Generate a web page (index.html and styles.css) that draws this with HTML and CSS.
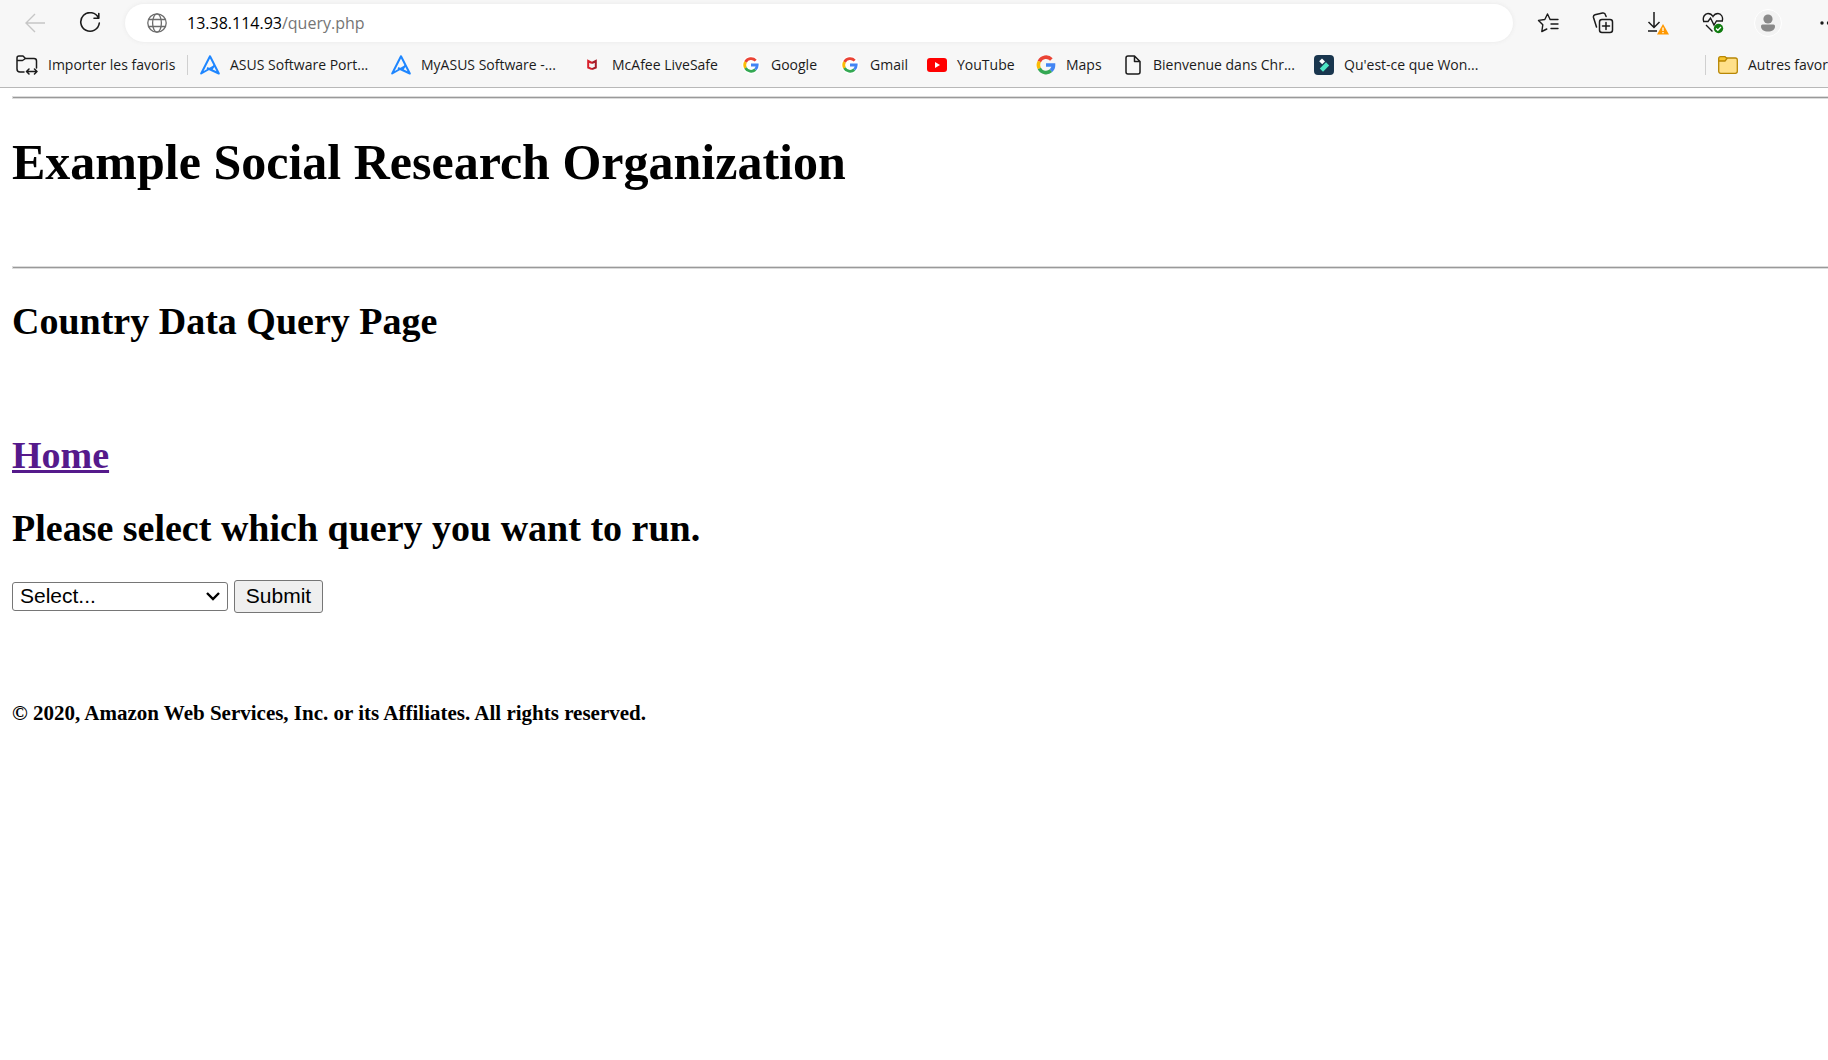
FILE: index.html
```html
<!DOCTYPE html>
<html lang="fr">
<head>
<meta charset="utf-8">
<title>Country Data Query Page</title>
<link rel="stylesheet" href="styles.css">
</head>
<body>
<header class="browser">
  <div class="toolbar">
    <button class="tool back" aria-label="Retour" disabled><svg width="20" height="20" viewBox="0 0 20 20" fill="none" stroke="#c6c6c6" stroke-width="1.4"><path d="M20 10H1M10 1L1 10l9 9"/></svg></button>
    <button class="tool reload" aria-label="Actualiser"><svg width="22" height="22" viewBox="0 0 22 22" fill="none" stroke="#1b1b1b" stroke-width="1.6" stroke-linecap="round" stroke-linejoin="round"><path d="M19.5 6A9.3 9.3 0 1 0 20.3 11M19.8 1.5V6.3H15"/></svg></button>
    <label class="address">
      <svg width="20" height="20" viewBox="0 0 20 20" fill="none" stroke="#6c6c6c" stroke-width="1.3"><circle cx="10" cy="10" r="9.2"/><ellipse cx="10" cy="10" rx="4.4" ry="9.2"/><path d="M1.8 6.5h16.4M1.8 13.5h16.4"/></svg>
      <span class="url" role="textbox" aria-label="Adresse">13.38.114.93<span class="path">/query.php</span></span>
    </label>
    <div class="actions">
      <button class="tool" aria-label="Favoris"><svg width="22" height="22" viewBox="0 0 22 22" fill="none" stroke="#1b1b1b" stroke-width="1.4" stroke-linejoin="round" stroke-linecap="round"><path d="M13 7.2L10.5 2 7.8 7.5 1.5 8.4l4.3 4.4-1 6.7 5-2.5M13 7.5h8M14 12h7M14 16.5h7"/></svg></button>
      <button class="tool" aria-label="Collections"><svg width="22" height="22" viewBox="0 0 22 22" fill="none" stroke="#1b1b1b" stroke-width="1.5" stroke-linecap="round"><rect x="7.5" y="7.5" width="13" height="13" rx="2.5"/><path d="M14 10.5v7M10.500 14h7M4.500 15L1.500 5.500Q1 3.500 3 2.800L10.500 1Q13 .5 13.500 3l.6 1.500"/></svg></button>
      <button class="tool" aria-label="Téléchargements"><svg width="22" height="24" viewBox="0 0 22 24"><path d="M7 1v15M1.500 11L7 16.500l5.500-5.500M1 20h9" fill="none" stroke="#1b1b1b" stroke-width="1.5"/><path d="M16 13l6 10.500H10z" fill="#ff9800"/><path d="M16 16.500v3.500M16 21v1.300" stroke="#fff" stroke-width="1.3"/></svg></button>
      <button class="tool" aria-label="Performances"><svg width="22" height="22" viewBox="0 0 22 22"><path d="M1.600 9C.4 5 3 1.500 6 1.500c2.300 0 4 1.300 5 3 1-1.700 2.700-3 5-3 3 0 5.500 3.500 4.200 7.500M1 9.500h5L8.500 6l3.500 7 2.500-4H21M4 13l6.500 6.500" fill="none" stroke="#1b1b1b" stroke-width="1.400"/><circle cx="16.500" cy="16.500" r="4.700" fill="#107c10"/><path d="M14 16.500l1.800 1.800 3.200-3.300" fill="none" stroke="#fff" stroke-width="1.300"/></svg></button>
      <button class="tool" aria-label="Profil"><svg width="28" height="28" viewBox="0 0 28 28"><circle cx="14" cy="14" r="13.500" fill="#f3f3f3" stroke="#fff"/><circle cx="14" cy="10" r="4.600" fill="#8a8a8a"/><path d="M8.500 15.500h11q1.500 0 1.500 1.500c0 4-3 5.500-7 5.500s-7-1.500-7-5.500q0-1.500 1.500-1.500z" fill="#8a8a8a"/></svg></button>
      <button class="tool" aria-label="Paramètres"><svg width="20" height="20" viewBox="0 0 20 20" fill="#1b1b1b"><circle cx="9" cy="10" r="1.700"/><circle cx="15.500" cy="10" r="1.700"/></svg></button>
    </div>
  </div>
  <nav class="favorites" aria-label="Favoris">
    <a class="fav" href="#"><svg width="22" height="20" viewBox="0 0 22 20" fill="none" stroke="#1b1b1b" stroke-width="1.500" stroke-linecap="round" stroke-linejoin="round"><path d="M8 17H4q-3 0-3-3V3q0-2 2-2h4l2.500 2.500H18q2.500 0 2.500 2.500v7M1 5.500h5.500l3-2M11 16.500h10M13 14l-2.500 2.500L13 19M18.500 14l2.500 2.500-2.500 2.500"/></svg>Importer les favoris</a>
    <a class="fav" href="#"><svg width="20" height="20" viewBox="0 0 20 20" fill="none" stroke="#1e86ff" stroke-width="2" stroke-linejoin="round"><path d="M7 13L18.800 18.500 10 1.200 1.200 18.500 13.500 11.500M14.500 10l-3 4.500"/></svg>ASUS Software Port...</a>
    <a class="fav" href="#"><svg width="20" height="20" viewBox="0 0 20 20" fill="none" stroke="#1e86ff" stroke-width="2" stroke-linejoin="round"><path d="M7 13L18.800 18.500 10 1.200 1.200 18.500 13.500 11.500M14.500 10l-3 4.500"/></svg>MyASUS Software -...</a>
    <a class="fav" href="#"><svg width="20" height="20" viewBox="0 0 20 20" fill="none" stroke-width="2"><path d="M10 14.200l-3.800-1.700V6L10 8" stroke="#d8202b"/><path d="M10 14.200l3.800-1.700V6L10 8" stroke="#a81c28"/></svg>McAfee LiveSafe</a>
    <a class="fav" href="#"><svg width="20" height="20" viewBox="0 0 20 20"><circle cx="10" cy="10" r="9" fill="#fff"/><g fill="none" stroke-width="2.800"><path d="M14.700 5.600A6.300 6.300 0 0 0 4.500 7" stroke="#ea4335"/><path d="M4.500 7a6.300 6.300 0 0 0 0 6" stroke="#fbbc05"/><path d="M4.500 13a6.300 6.300 0 0 0 9.800 1.600" stroke="#34a853"/><path d="M14.300 14.600A6.300 6.300 0 0 0 16.200 10H10" stroke="#4285f4"/></g></svg>Google</a>
    <a class="fav" href="#"><svg width="20" height="20" viewBox="0 0 20 20"><circle cx="10" cy="10" r="9" fill="#fff"/><g fill="none" stroke-width="2.800"><path d="M14.700 5.600A6.300 6.300 0 0 0 4.500 7" stroke="#ea4335"/><path d="M4.500 7a6.300 6.300 0 0 0 0 6" stroke="#fbbc05"/><path d="M4.500 13a6.300 6.300 0 0 0 9.800 1.600" stroke="#34a853"/><path d="M14.300 14.600A6.300 6.300 0 0 0 16.200 10H10" stroke="#4285f4"/></g></svg>Gmail</a>
    <a class="fav" href="#"><svg width="20" height="20" viewBox="0 0 20 20"><rect y="3" width="20" height="14" rx="3" fill="#f00"/><path d="M8 7l5 3-5 3z" fill="#fff"/></svg>YouTube</a>
    <a class="fav" href="#"><svg width="20" height="20" viewBox="0 0 20 20" fill="none" stroke-width="3.600"><path d="M15.400 4.400A7.500 7.500 0 0 0 3.300 6.500" stroke="#ea4335"/><path d="M3.300 6.500a7.500 7.500 0 0 0 0 7" stroke="#fbbc05"/><path d="M3.300 13.500a7.500 7.500 0 0 0 11.700 2.200" stroke="#34a853"/><path d="M15 15.700a7.500 7.500 0 0 0 2.500-5.700H10" stroke="#4285f4"/></svg>Maps</a>
    <a class="fav" href="#"><svg width="20" height="20" viewBox="0 0 20 20" fill="none" stroke="#1b1b1b" stroke-width="1.500" stroke-linejoin="round"><path d="M11.500 1H5Q3 1 3 3v14q0 2 2 2h10q2 0 2-2V6.500zV6.500H17"/></svg>Bienvenue dans Chr...</a>
    <a class="fav" href="#"><svg width="20" height="20" viewBox="0 0 20 20"><rect width="20" height="20" rx="4" fill="#19364e"/><path d="M8 3.500l3 3-2.800 2.800-3-3z" fill="#fff"/><path d="M12 7.300l3.200 3.200-6.200 6.200-3.200-3.200z" fill="#4ee6c5"/></svg>Qu'est-ce que Won...</a>
    <a class="fav others" href="#"><svg width="20" height="18" viewBox="0 0 20 18" stroke="#b88705" stroke-width="1.300"><rect x=".7" y="2" width="18.600" height="15.300" rx="2" fill="#ffe08a"/><path d="M.7 5V2.500Q.7.700 2.500.700h4.500l2 1.800-2 2.500z" fill="#f7c52e"/></svg>Autres favoris</a>
  </nav>
</header>
<main class="page">
  <hr class="rule">
  <h1 class="title">Example Social Research Organization</h1>
  <hr class="rule">
  <h2 class="heading">Country Data Query Page</h2>
  <h2 class="heading home"><a class="visited" href="#">Home</a></h2>
  <h2 class="heading" id="prompt">Please select which query you want to run.</h2>
  <form class="query">
    <select class="choice" aria-labelledby="prompt"><option>Select...</option></select>
    <button class="submit" type="button">Submit</button>
  </form>
  <footer class="copyright">© 2020, Amazon Web Services, Inc. or its Affiliates. All rights reserved.</footer>
</main>
</body>
</html>
```
FILE: styles.css
```css
* { box-sizing: border-box; }

body {
  margin: 0;
  background: #fff;
  color: #000;
  font-family: "Liberation Serif", serif;
  overflow-x: hidden;
}

.browser {
  height: 88px;
  overflow: hidden;
  background: #f7f7f7;
  border-bottom: 1px solid #b8b8b8;
  font-family: "Open Sans", sans-serif;
}

.toolbar {
  display: flex;
  align-items: center;
  height: 46px;
  padding-left: 25px;
}

.tool {
  display: flex;
  flex: none;
  align-items: center;
  justify-content: center;
  padding: 0;
  border: 0;
  background: none;
}

.back { width: 20px; }
.reload { width: 22px; margin: 0 24px 0 34px; }

.address {
  display: flex;
  flex: 1;
  align-items: center;
  gap: 20px;
  height: 38px;
  padding-left: 22px;
  border-radius: 19px;
  background: #fff;
  box-shadow: 0 0 4px #e8e8e8;
}

.url { font-size: 16px; line-height: 24px; }
.path { color: #757575; }

.actions {
  display: flex;
  flex: none;
  width: 315px;
  padding-left: 7px;
}

.actions .tool { width: 55px; height: 28px; flex: none; }

.favorites {
  display: grid;
  grid-template-columns: 184px 191px 191px 159px 99px 87px 109px 87px 191px 190px 1fr;
  align-items: center;
  height: 38px;
  padding-left: 16px;
}

.fav {
  display: flex;
  align-items: center;
  gap: 10px;
  color: #1b1b1b;
  font-size: 14px;
  line-height: 20px;
  text-decoration: none;
  white-space: nowrap;
}

.fav svg { flex: none; }

.fav:first-child {
  width: 172px;
  border-right: 1px solid #d0d0d0;
}

.others {
  justify-self: end;
  width: 123px;
  padding-left: 12px;
  border-left: 1px solid #d0d0d0;
}

.page { padding: 8px 0 0 12px; }

.rule {
  height: 3px;
  margin: 0;
  border: 1px solid #dcdcdc;
  border-right: 0;
  background: #999;
}

.title {
  margin: 34px 0 75px;
  font-size: 50px;
  line-height: 58px;
}

.heading {
  margin: 31px 0;
  font-size: 38px;
  line-height: 42px;
}

.home { margin-top: 92px; }
.visited { color: #551a8b; }

.query {
  display: flex;
  align-items: center;
  gap: 6px;
}

.choice, .submit {
  border: 1px solid #767676;
  border-radius: 3px;
  color: #000;
  font-family: "Liberation Sans", sans-serif;
  font-size: 21px;
  line-height: 24px;
}

.choice {
  appearance: none;
  width: 216px;
  height: 29px;
  padding: 0 7px 2px;
  background: #fff url("data:image/svg+xml,%3Csvg xmlns='http://www.w3.org/2000/svg' width='16' height='12' fill='none' stroke='black' stroke-width='2.4'%3E%3Cpath d='M2 2l6 6 6-6'/%3E%3C/svg%3E") no-repeat right 6px center;
}

.submit {
  width: 89px;
  height: 33px;
  padding: 0 0 2px;
  background: #efefef;
}

.copyright {
  margin-top: 88px;
  font-size: 21px;
  font-weight: bold;
  line-height: 24px;
}
```
